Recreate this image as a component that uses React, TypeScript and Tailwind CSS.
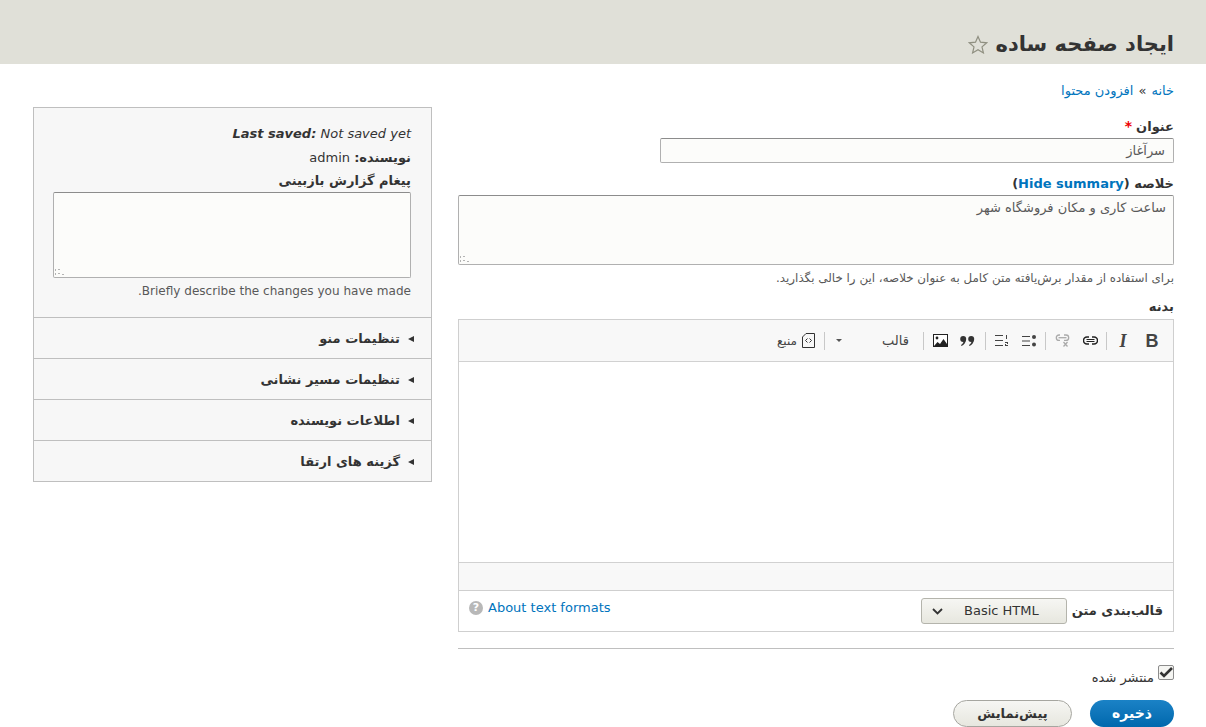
import type { ReactNode } from "react";

const font = "font-['DejaVu_Sans',sans-serif]";

function Grip() {
  return (
    <svg className="absolute bottom-0 left-0" width="12" height="9" viewBox="0 0 12 9" fill="#b4b4b4">
      <rect x="1" y="1" width="1" height="2" />
      <rect x="4" y="1" width="2" height="1" />
      <rect x="1" y="5" width="1" height="2" />
      <rect x="4" y="5" width="2" height="1" />
      <rect x="8" y="6" width="2" height="1" />
    </svg>
  );
}

function Sep() {
  return <span className="mx-[8px] h-[18px] w-px shrink-0 bg-[#c8c8c8]" />;
}

function ToolIcon({ children }: { children: ReactNode }) {
  return <span className="flex h-[16px] w-[16px] shrink-0 items-center justify-center">{children}</span>;
}

function Toolbar() {
  return (
    <div className="flex h-[42px] items-center border-b border-[#d1d1d1] bg-[#f8f8f8] pr-[13px]">
      <ToolIcon>
        <span className="font-['Liberation_Sans',sans-serif] text-[18px] font-bold leading-none text-[#444]">B</span>
      </ToolIcon>
      <span className="w-[13px]" />
      <ToolIcon>
        <span className="font-['Liberation_Serif',serif] text-[18px] font-bold italic leading-none text-[#444]">I</span>
      </ToolIcon>
      <Sep />
      <ToolIcon>
        <svg width="15" height="9" viewBox="0 0 15 9" fill="none" stroke="#222" strokeWidth="1.500">
          <path d="M6 1H4a3.500 3.500 0 0 0 0 7h2M9 1h2a3.500 3.500 0 0 1 0 7H9" />
          <path d="M3.500 3.500h8M3.500 5.500h8" strokeWidth="1" />
        </svg>
      </ToolIcon>
      <span className="w-[12px]" />
      <ToolIcon>
        <svg width="15" height="13" viewBox="0 0 15 13" fill="none" stroke="#aaa" strokeWidth="1.300">
          <path d="M5 1H4a2.700 2.700 0 0 0 0 5.400h1M9 1h2a2.700 2.700 0 0 1 0 5.400H9" />
          <path d="M3.500 3.700h8" />
          <path d="M8.500 8l4 4.500M12.500 8l-4 4.500" />
        </svg>
      </ToolIcon>
      <Sep />
      <ToolIcon>
        <svg width="15" height="12" viewBox="0 0 15 12" fill="#444">
          <rect x="0" y="1" width="8" height="1" />
          <rect x="0" y="5.500" width="8" height="1" />
          <rect x="0" y="10" width="8" height="1" />
          <circle cx="12" cy="2" r="2" />
          <circle cx="12" cy="9.500" r="2" />
        </svg>
      </ToolIcon>
      <span className="w-[11px]" />
      <ToolIcon>
        <svg width="14" height="13" viewBox="0 0 14 13" fill="#444">
          <rect x="0" y="1" width="8" height="1" />
          <rect x="0" y="6" width="8" height="1" />
          <rect x="0" y="11" width="8" height="1" />
          <rect x="11" y="1" width="1" height="4" />
          <path d="M10 8h3v2h-2v1h2v1h-3v-2h2V9h-2z" />
        </svg>
      </ToolIcon>
      <span className="mr-[8px] ml-[10px] h-[18px] w-px shrink-0 bg-[#c8c8c8]" />
      <ToolIcon>
        <svg width="15" height="10" viewBox="0 0 15 10" fill="#333">
          <circle cx="3.200" cy="3" r="3" />
          <path d="M6 3c0 3.500-2 6-4.500 7l-.5-1c1.600-.8 2.500-2.500 2.500-4z" />
          <circle cx="11.200" cy="3" r="3" />
          <path d="M14 3c0 3.500-2 6-4.500 7l-.5-1c1.600-.8 2.500-2.500 2.500-4z" />
        </svg>
      </ToolIcon>
      <span className="w-[11px]" />
      <ToolIcon>
        <svg width="15" height="13" viewBox="0 0 15 13">
          <rect x="0.500" y="0.500" width="14" height="12" fill="#fff" stroke="#222" />
          <circle cx="4" cy="4" r="1.400" fill="#222" />
          <path d="M1 12l3.500-4 2.500 2 3.500-5 3.500 5v2z" fill="#222" />
        </svg>
      </ToolIcon>
      <Sep />
      <span className="mr-[6px] w-[26px] shrink-0 text-[13px] leading-none text-[#444]">قالب</span>
      <span className="mr-[41px] h-0 w-0 shrink-0 border-x-[3px] border-t-[3px] border-x-transparent border-t-[#555]" />
      <span className="mr-[11px] ml-[8px] h-[18px] w-px shrink-0 bg-[#c8c8c8]" />
      <ToolIcon>
        <svg width="13" height="15" viewBox="0 0 13 15" fill="none" stroke="#333">
          <path d="M4 .500h8.500v14H.500V4z" />
          <path d="M5.500 5.500L3.500 7.500l2 2M7.500 5.500l2 2-2 2" />
        </svg>
      </ToolIcon>
      <span className="mr-[3px] shrink-0 text-[12px] leading-none text-[#444]">منبع</span>
    </div>
  );
}

function DetailRow({ title }: { title: string }) {
  return (
    <div className="flex h-[41px] items-center gap-[8px] border-t border-[#bfbfbf] pt-[2px] pr-[17px] text-[13px] font-bold text-[#333]">
      <span className="h-0 w-0 border-y-[3.500px] border-r-[6px] border-y-transparent border-r-[#333]" />
      <span>{title}</span>
    </div>
  );
}

export default function App() {
  return (
    <div dir="rtl" className={`${font} h-[727px] overflow-hidden bg-white text-[13px] text-[#333]`}>
      <header className="flex h-[64px] items-end bg-[#e0e0d8] px-[32px] pb-[7px]">
        <h1 className="text-[21px] font-bold leading-[26px] text-[#333]">ایجاد صفحه ساده</h1>
        <svg className="mr-[8px] mb-[3px]" width="20" height="19" viewBox="0 0 20 19" fill="none" stroke="#8f8f80" strokeWidth="1.200">
          <path d="M10 1.500l2.500 5.700 6.200.6-4.700 4.100 1.400 6-5.400-3.200-5.400 3.200 1.400-6L1.300 7.800l6.200-.6z" />
        </svg>
      </header>

      <main className="pr-[32px] pl-[33px]">
        <nav className="flex h-[43px] items-center pt-[10px] text-[13px] leading-none">
          <a className="text-[#0074bd]">خانه</a>
          <span className="mx-[5px]">»</span>
          <a className="text-[#0074bd]">افزودن محتوا</a>
        </nav>

        <div className="flex justify-between">
          <div className="w-[716px] pt-[10px]">
            <label className="flex h-[21px] items-center gap-[4px] pb-[2px] text-[13px] font-bold">
              <span>عنوان</span>
              <span className="text-[14px] text-[#e00]">*</span>
            </label>
            <div className="h-[25px] w-[514px] rounded-[2px] border border-[#b0b0b0] border-t-[#8c8c8c] bg-[#fcfcfa] px-[8px] text-[13px] leading-[23px] text-[#595959]">
              سرآغاز
            </div>

            <div className="mt-[11px] h-[21px] text-[13px] font-bold leading-[19px]">
              خلاصه <span>(</span>
              <a className="text-[#0074bd]">Hide summary</a>
              <span>)</span>
            </div>
            <div className="relative h-[70px] rounded-[2px] border border-[#b0b0b0] border-t-[#8c8c8c] bg-[#fcfcfa] px-[7px] py-[3px] text-[13px] leading-[18px] text-[#595959]">
              ساعت کاری و مکان فروشگاه شهر
              <Grip />
            </div>
            <p className="mt-[5px] text-[11.900px] leading-[16px] text-[#595959]">
              برای استفاده از مقدار برش‌یافته متن کامل به عنوان خلاصه، این را خالی بگذارید.
            </p>

            <div className="mt-[11px] h-[22px] text-[13px] font-bold leading-[20px]">بدنه</div>
            <div className="border border-[#cfcfcf]">
              <Toolbar />
              <div className="h-[200px] bg-white" />
              <div className="h-[28px] border-t border-[#d1d1d1] bg-[#f8f8f8]" />
              <div className="flex h-[41px] items-center justify-between border-t border-[#cfcfcf] pr-[10px] pl-[10px]">
                <div className="flex items-center gap-[5px]">
                  <span className="text-[13px] font-bold">قالب‌بندی متن</span>
                  <div className="flex h-[26px] w-[146px] items-center justify-between rounded-[3px] border border-[#b4b4ac] bg-gradient-to-b from-[#f6f6f3] to-[#e7e7df] pr-[27px] pl-[10px]">
                    <span dir="ltr" className="whitespace-nowrap text-[13px] text-[#333]">Basic HTML</span>
                    <svg width="11" height="7" viewBox="0 0 11 7" fill="none" stroke="#333" strokeWidth="1.800">
                      <path d="M1 1l4.500 4.500L10 1" />
                    </svg>
                  </div>
                </div>
                <div dir="ltr" className="flex items-center gap-[5px] pb-[7px]">
                  <span className="flex h-[14px] w-[14px] items-center justify-center rounded-full bg-[#b8b8b8] text-[11px] font-bold leading-none text-white">?</span>
                  <a className="text-[13px] text-[#0074bd]">About text formats</a>
                </div>
              </div>
            </div>

            <hr className="mt-[16px] border-0 border-t border-[#bfbfbf]" />

            <label className="mt-[16px] flex items-start gap-[4px] text-[13px] leading-none text-[#333]">
              <span className="flex h-[15px] w-[16px] items-center justify-center rounded-[2px] border border-[#8c8c8c] bg-[#f5f5f2]">
                <svg width="14" height="11" viewBox="0 0 14 11" fill="none" stroke="#333" strokeWidth="2.600">
                  <path d="M1.500 5.500l3.500 3.500L13 1" />
                </svg>
              </span>
              <span className="mt-[6px]">منتشر شده</span>
            </label>

            <div className="mt-[16px] flex gap-[18px]">
              <button className="flex h-[27px] w-[84px] items-center justify-center rounded-[14px] bg-gradient-to-b from-[#1a82c6] to-[#0068ad] text-[14px] font-bold text-white">ذخیره</button>
              <button className="flex h-[27px] w-[119px] items-center justify-center rounded-[14px] border border-[#a6a6a0] bg-gradient-to-b from-[#f6f6f3] to-[#e7e7df] text-[13px] font-bold text-[#333]">پیش‌نمایش</button>
            </div>
          </div>

          <aside className="h-[375px] w-[399px] border border-[#bfbfbf] bg-[#f7f7f7]">
            <div className="h-[209px] pr-[20px] pl-[19px] pt-[16px]">
              <p className="h-[22px] text-[13px] italic leading-[20px]">
                <span dir="ltr" className="inline-block">
                  <b>Last saved:</b> Not saved yet
                </span>
              </p>
              <p className="h-[24px] text-[13px] leading-[24px]">
                <b>نویسنده:</b> admin
              </p>
              <p className="h-[22px] pt-[1px] text-[13px] font-bold leading-[20px]">پیغام گزارش بازبینی</p>
              <div className="relative h-[86px] rounded-[2px] border border-[#b0b0b0] border-t-[#8c8c8c] bg-[#fcfcfa]">
                <Grip />
              </div>
              <p className="mt-[4px] text-[12.050px] leading-[18px] text-[#595959]">Briefly describe the changes you have made.</p>
            </div>
            <DetailRow title="تنظیمات منو" />
            <DetailRow title="تنظیمات مسیر نشانی" />
            <DetailRow title="اطلاعات نویسنده" />
            <DetailRow title="گزینه های ارتقا" />
          </aside>
        </div>
      </main>
    </div>
  );
}
